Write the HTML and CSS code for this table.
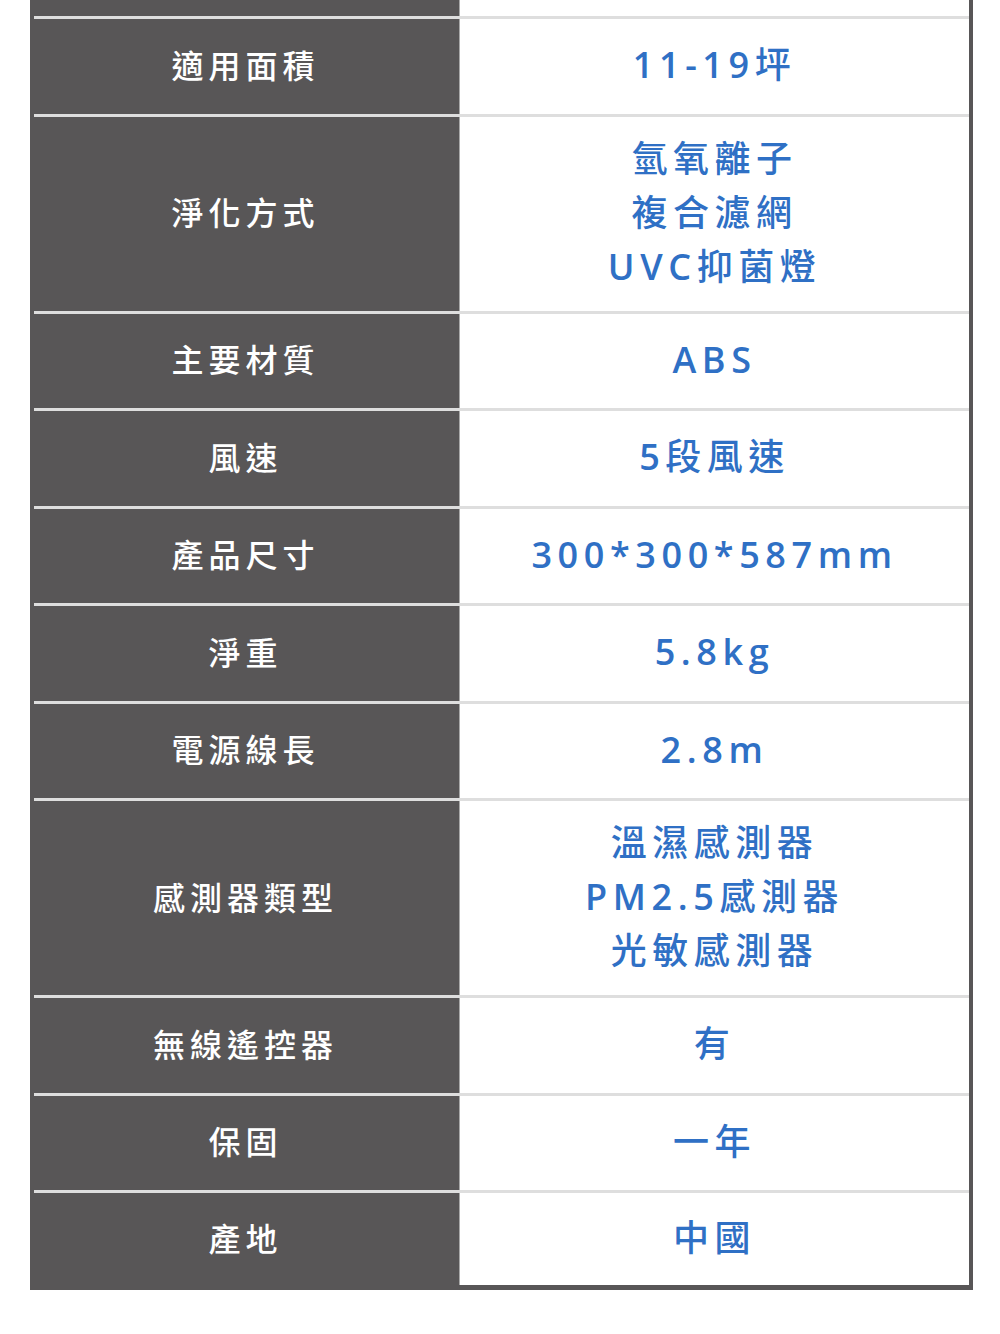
FILE: index.html
```html
<!DOCTYPE html>
<html lang="zh-Hant">
<head>
<meta charset="utf-8">
<title>規格表</title>
<link rel="stylesheet" href="styles.css">
</head>
<body>
<div class="spec">
  <div class="row top"><div class="key"></div><div class="val"></div></div>
  <div class="sep"></div>
  <div class="row"><div class="key">適用面積</div><div class="val"><div class="txt"><span class="lat">11-19</span>坪</div></div></div>
  <div class="sep"></div>
  <div class="row tall"><div class="key">淨化方式</div><div class="val"><div class="txt">氫氧離子<br>複合濾網<br><span class="lat">UVC</span>抑菌燈</div></div></div>
  <div class="sep"></div>
  <div class="row"><div class="key">主要材質</div><div class="val"><div class="txt"><span class="lat">ABS</span></div></div></div>
  <div class="sep"></div>
  <div class="row"><div class="key">風速</div><div class="val"><div class="txt"><span class="lat">5</span>段風速</div></div></div>
  <div class="sep"></div>
  <div class="row"><div class="key">產品尺寸</div><div class="val"><div class="txt"><span class="lat">300*300*587mm</span></div></div></div>
  <div class="sep"></div>
  <div class="row"><div class="key">淨重</div><div class="val"><div class="txt"><span class="lat">5.8kg</span></div></div></div>
  <div class="sep"></div>
  <div class="row"><div class="key">電源線長</div><div class="val"><div class="txt"><span class="lat">2.8m</span></div></div></div>
  <div class="sep"></div>
  <div class="row tall"><div class="key">感測器類型</div><div class="val"><div class="txt">溫濕感測器<br><span class="lat">PM2.5</span>感測器<br>光敏感測器</div></div></div>
  <div class="sep"></div>
  <div class="row"><div class="key">無線遙控器</div><div class="val"><div class="txt">有</div></div></div>
  <div class="sep"></div>
  <div class="row"><div class="key">保固</div><div class="val"><div class="txt">一年</div></div></div>
  <div class="sep"></div>
  <div class="row last"><div class="key">產地</div><div class="val"><div class="txt">中國</div></div></div>
</div>
</body>
</html>
```
FILE: styles.css
```css
html, body {
  margin: 0;
  padding: 0;
  background: #ffffff;
}
body {
  font-family: "Open Sans", "Noto Sans CJK TC", sans-serif;
}
.spec {
  margin-left: 30px;
  width: 943px;
  box-sizing: border-box;
  background: #585657;
  padding-right: 4px;
  padding-bottom: 5px;
}
.row {
  display: flex;
  height: 94.5px;
}
.row.top {
  height: 16px;
}
.row.tall {
  height: 194px;
}
.row.last {
  height: 92px;
}
.sep {
  height: 3px;
  margin-left: 4px;
  background: #dedede;
}
.key {
  width: 429px;
  flex: none;
  display: flex;
  align-items: center;
  justify-content: center;
  color: #ffffff;
  font-family: "Noto Sans CJK TC", sans-serif;
  font-weight: 500;
  font-size: 32px;
  letter-spacing: 5px;
  padding-left: 2px;
  padding-bottom: 5px;
  box-sizing: border-box;
}
.val {
  flex: 1;
  background: #ffffff;
  border-left: 1px solid #a9a9a9;
  display: flex;
  align-items: center;
  justify-content: center;
  color: #2f70c5;
  font-weight: 500;
  font-size: 36px;
  line-height: 54px;
  letter-spacing: 5.5px;
  padding-bottom: 2px;
  box-sizing: border-box;
}
.txt {
  text-align: center;
  white-space: nowrap;
}
.lat {
  font-weight: 600;
  letter-spacing: 5.6px;
}
```
